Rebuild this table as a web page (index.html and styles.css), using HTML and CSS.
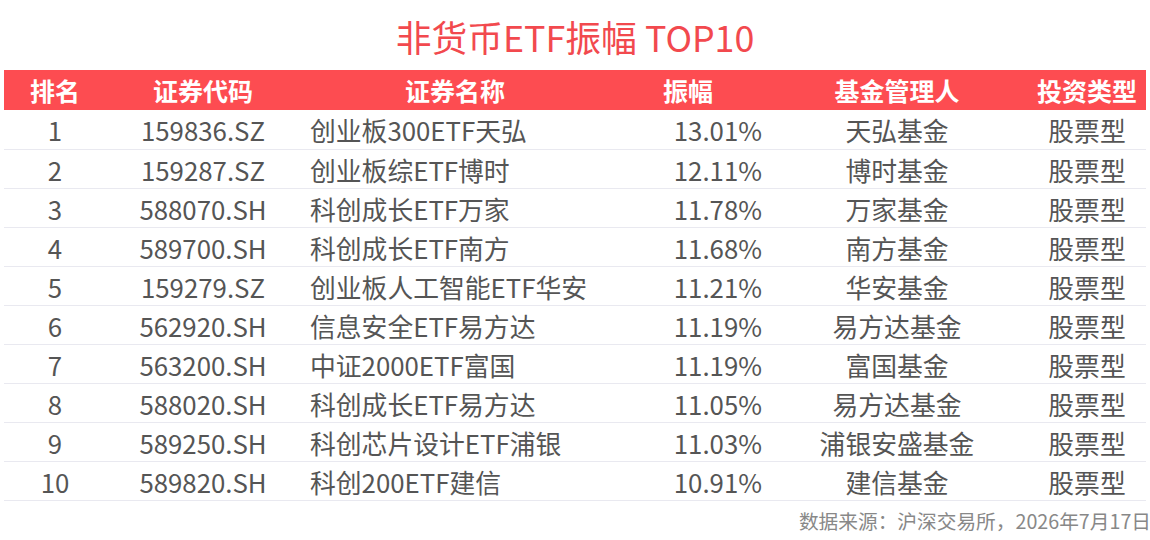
FILE: index.html
```html
<!DOCTYPE html>
<html lang="zh-CN">
<head>
<meta charset="utf-8">
<title>非货币ETF振幅 TOP10</title>
<link rel="stylesheet" href="styles.css">
</head>
<body>
<div class="page">
  <h1 class="title">非货币ETF振幅 TOP10</h1>
  <table class="rank-table">
    <colgroup>
      <col class="c-rank"><col class="c-code"><col class="c-name"><col class="c-amp"><col class="c-mgr"><col class="c-type">
    </colgroup>
    <thead>
      <tr><th>排名</th><th>证券代码</th><th>证券名称</th><th>振幅</th><th>基金管理人</th><th>投资类型</th></tr>
    </thead>
    <tbody>
      <tr><td>1</td><td>159836.SZ</td><td class="name">创业板300ETF天弘</td><td class="amp">13.01%</td><td>天弘基金</td><td>股票型</td></tr>
      <tr><td>2</td><td>159287.SZ</td><td class="name">创业板综ETF博时</td><td class="amp">12.11%</td><td>博时基金</td><td>股票型</td></tr>
      <tr><td>3</td><td>588070.SH</td><td class="name">科创成长ETF万家</td><td class="amp">11.78%</td><td>万家基金</td><td>股票型</td></tr>
      <tr><td>4</td><td>589700.SH</td><td class="name">科创成长ETF南方</td><td class="amp">11.68%</td><td>南方基金</td><td>股票型</td></tr>
      <tr><td>5</td><td>159279.SZ</td><td class="name">创业板人工智能ETF华安</td><td class="amp">11.21%</td><td>华安基金</td><td>股票型</td></tr>
      <tr><td>6</td><td>562920.SH</td><td class="name">信息安全ETF易方达</td><td class="amp">11.19%</td><td>易方达基金</td><td>股票型</td></tr>
      <tr><td>7</td><td>563200.SH</td><td class="name">中证2000ETF富国</td><td class="amp">11.19%</td><td>富国基金</td><td>股票型</td></tr>
      <tr><td>8</td><td>588020.SH</td><td class="name">科创成长ETF易方达</td><td class="amp">11.05%</td><td>易方达基金</td><td>股票型</td></tr>
      <tr><td>9</td><td>589250.SH</td><td class="name">科创芯片设计ETF浦银</td><td class="amp">11.03%</td><td>浦银安盛基金</td><td>股票型</td></tr>
      <tr><td>10</td><td>589820.SH</td><td class="name">科创200ETF建信</td><td class="amp">10.91%</td><td>建信基金</td><td>股票型</td></tr>
    </tbody>
  </table>
  <p class="source">数据来源：沪深交易所，2026年7月17日</p>
</div>
</body>
</html>
```

FILE: styles.css
```css
* { box-sizing: border-box; }
html, body {
  margin: 0;
  padding: 0;
  background: #ffffff;
}
body {
  font-family: "Noto Sans CJK SC", "Noto Sans", sans-serif;
  color: #555555;
  width: 1150px;
  height: 540px;
  overflow: hidden;
}
.page {
  width: 1150px;
}
.title {
  margin: 0;
  height: 70px;
  padding-top: 2px;
  display: flex;
  align-items: center;
  justify-content: center;
  font-size: 35.8px;
  font-weight: 400;
  color: #f2494e;
  letter-spacing: 0;
}
.rank-table {
  margin-left: 4px;
  width: 1142px;
  border-collapse: collapse;
  table-layout: fixed;
}
.c-rank { width: 102px; }
.c-code { width: 194px; }
.c-name { width: 310px; }
.c-amp { width: 156px; }
.c-mgr { width: 262px; }
.c-type { width: 118px; }
.rank-table thead tr {
  background: #fd4c51;
}
.rank-table th {
  height: 40px;
  padding: 0;
  color: #ffffff;
  font-size: 25px;
  font-weight: 700;
  text-align: center;
  vertical-align: middle;
  line-height: 40px;
}
.rank-table td {
  height: 39px;
  padding: 2px 0 0 0;
  font-size: 25.8px;
  line-height: 36px;
  text-align: center;
  vertical-align: middle;
  border-bottom: 1px solid #e9e9f0;
  white-space: nowrap;
  color: #555555;
}
.rank-table td.name {
  text-align: left;
  padding-left: 10px;
}
.rank-table td.amp {
  text-align: right;
  padding-right: 4px;
}
.source {
  margin: 7px -1px 0 0;
  text-align: right;
  font-size: 19.7px;
  line-height: 26px;
  color: #888888;
}
```
